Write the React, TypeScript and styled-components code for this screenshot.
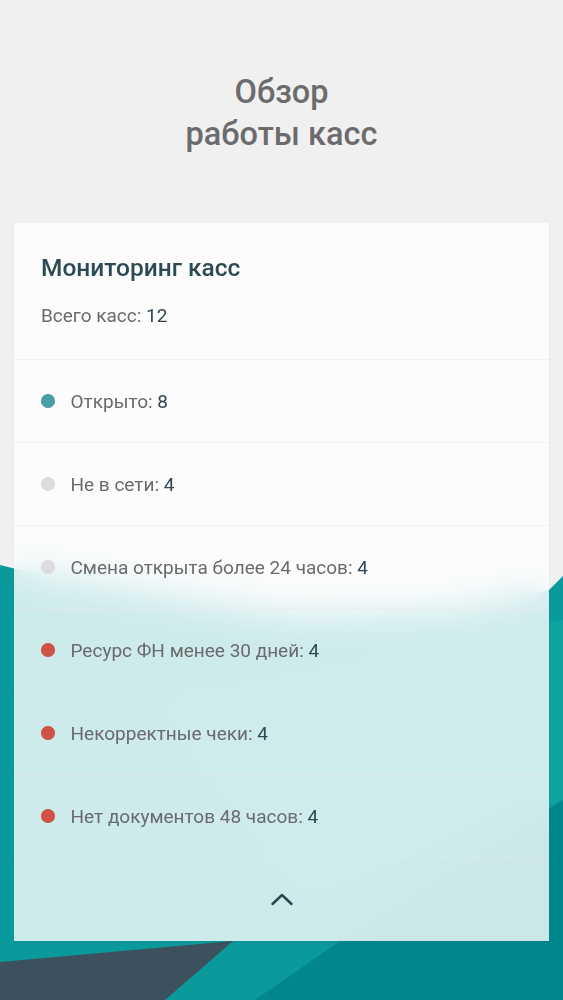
import React from 'react'
import styled, { createGlobalStyle } from 'styled-components'

const GlobalStyle = createGlobalStyle`
  html, body {
    margin: 0;
    padding: 0;
    background: #f0f0f1;
    font-family: Roboto, 'Noto Sans', 'Liberation Sans', sans-serif;
  }
  * {
    box-sizing: border-box;
  }
`

const Page = styled.div`
  position: relative;
  min-height: 1000px;
  overflow: hidden;
`

const Backdrop = styled.svg`
  position: absolute;
  top: 0;
  left: 0;
  width: 563px;
  height: 1000px;
  z-index: 0;
`

const Content = styled.div`
  position: relative;
  z-index: 1;
  display: flex;
  flex-direction: column;
  padding-top: 71px;
`

const PageTitle = styled.h1`
  margin: 0 0 68px;
  font-size: 32.5px;
  line-height: 42px;
  font-weight: 500;
  color: #6b6b6d;
  text-align: center;
`

const Card = styled.section`
  margin: 0 14px;
  background: rgba(255, 255, 255, 0.8);
  backdrop-filter: blur(18px);
  -webkit-backdrop-filter: blur(18px);
  box-shadow: 0 1px 2px rgba(0, 0, 0, 0.06);
`

const CardHeader = styled.div`
  padding: 31px 27px 32px;
`

const CardTitle = styled.h2`
  margin: 0;
  font-size: 24.5px;
  line-height: 28px;
  font-weight: 500;
  color: #2c4a55;
`

const Total = styled.div`
  margin-top: 23px;
  font-size: 19px;
  line-height: 22px;
  color: #6a6a6c;
`

const Value = styled.span`
  color: #2f4650;
`

const Row = styled.div`
  display: flex;
  align-items: center;
  gap: 16px;
  height: 83px;
  padding-left: 27px;
  border-top: 1px solid rgba(234, 234, 237, 0.55);
  font-size: 19px;
  color: #6a6a6c;
`

const Dot = styled.span<{ $color: string }>`
  width: 13.5px;
  height: 13.5px;
  border-radius: 50%;
  flex-shrink: 0;
  background: ${(p) => p.$color};
`

const Footer = styled.div`
  display: flex;
  align-items: center;
  justify-content: center;
  height: 84px;
  border-top: 1px solid rgba(234, 234, 237, 0.4);
  padding-bottom: 2px;
`

const COLORS = {
  ok: '#4b9fa1',
  off: '#dcdcdf',
  bad: '#d05348',
}

const rows: { label: string; value: number; status: keyof typeof COLORS }[] = [
  { label: 'Открыто', value: 8, status: 'ok' },
  { label: 'Не в сети', value: 4, status: 'off' },
  { label: 'Смена открыта более 24 часов', value: 4, status: 'off' },
  { label: 'Ресурс ФН менее 30 дней', value: 4, status: 'bad' },
  { label: 'Некорректные чеки', value: 4, status: 'bad' },
  { label: 'Нет документов 48 часов', value: 4, status: 'bad' },
]

const App = () => {
  return (
    <Page>
      <GlobalStyle />
      <Backdrop viewBox="0 0 563 1000" preserveAspectRatio="none">
        <polygon
          points="0,565 20,570 200,600 300,615 450,610 549,590 563,576 563,1000 0,1000"
          fill="#0a9a9b"
        />
        <polygon points="150,700 563,620 563,800 300,900" fill="#11a2a2" />
        <polygon points="563,800 563,1000 255,1000 340,941" fill="#01878b" />
        <polygon points="0,962 233,941 165,1000 0,1000" fill="#3c515d" />
      </Backdrop>
      <Content>
        <PageTitle>
          Обзор
          <br />
          работы касс
        </PageTitle>
        <Card>
          <CardHeader>
            <CardTitle>Мониторинг касс</CardTitle>
            <Total>
              Всего касс: <Value>12</Value>
            </Total>
          </CardHeader>
          {rows.map((r) => (
            <Row key={r.label}>
              <Dot $color={COLORS[r.status]} />
              <span>
                {r.label}: <Value>{r.value}</Value>
              </span>
            </Row>
          ))}
          <Footer>
            <svg width="24" height="14" viewBox="0 0 24 14" fill="none">
              <path
                d="M2.5 12 L12 3 L21.5 12"
                stroke="#2f4650"
                strokeWidth="2.5"
                strokeLinecap="round"
                strokeLinejoin="round"
              />
            </svg>
          </Footer>
        </Card>
      </Content>
    </Page>
  )
}

export default App
